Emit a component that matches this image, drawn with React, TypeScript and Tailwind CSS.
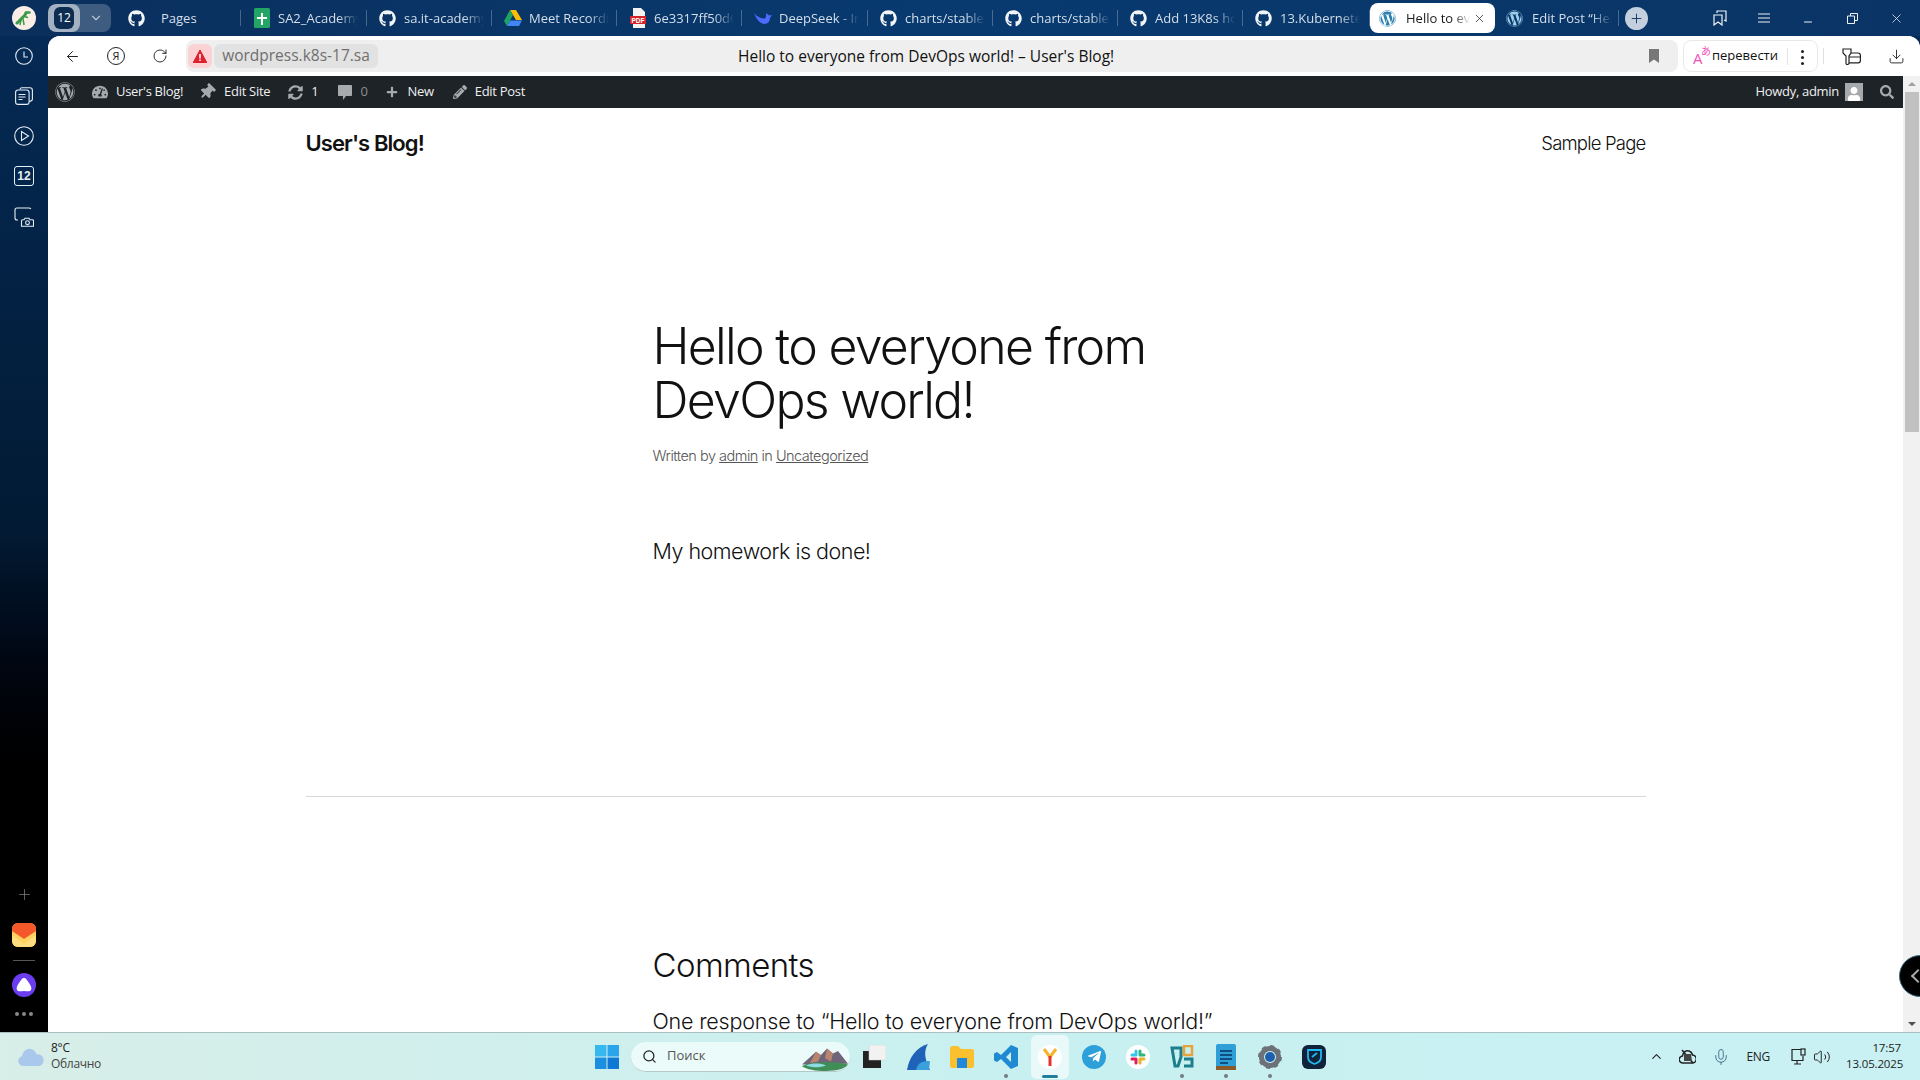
import { ReactNode } from "react";
import { ArrowLeft, ChevronDown, ChevronUp, Download, Mic, Minus, Plus, RotateCw, Search, Volume2, X } from "lucide-react";
import { FaGithub, FaPencilAlt, FaPlus, FaSearch, FaSyncAlt, FaTachometerAlt, FaTelegramPlane, FaThumbtack, FaUser, FaWordpress } from "react-icons/fa";

const fade = "[mask-image:linear-gradient(to_right,black_75%,transparent)]";

function Sheets() {
  return (
    <svg width="16" height="20" viewBox="0 0 16 20">
      <rect width="16" height="20" rx="1.5" fill="#23a566" />
      <path d="M7 5h2v4h4v2H9v6H7v-6H3V9h4z" fill="#fff" />
    </svg>
  );
}

function Drive() {
  return (
    <svg width="18" height="16" viewBox="0 0 18 16">
      <path d="M6 0h6l6 10h-6z" fill="#fbbc04" />
      <path d="M6 0l3 5-6 11-3-5z" fill="#1ea362" />
      <path d="M6 10.5h12L15 16H3z" fill="#4285f4" />
    </svg>
  );
}

function Pdf() {
  return (
    <svg width="16" height="20" viewBox="0 0 16 20">
      <path d="M3 0h8l4 4v16H3z" fill="#f3f3f3" />
      <rect y="8" width="16" height="8" fill="#d6232b" />
      <text x="8" y="14.6" textAnchor="middle" fontSize="6.5" fontWeight="700" fill="#fff" fontFamily="Liberation Sans, sans-serif">PDF</text>
    </svg>
  );
}

function Whale() {
  return (
    <svg width="18" height="14" viewBox="0 0 18 14">
      <path d="M0 2c2 5 5 10 10 11 4 0 6-3 6-6l2-3-3 .5c-1-1.500-2-2-3-2 .5 2 0 4-1 5C8 8 3 6 0 2z" fill="#4d6bfe" />
    </svg>
  );
}

const gh = <FaGithub size={17} className="text-[#f2f5f8]" />;

const tabs: { icon: ReactNode; label: string; width: string }[] = [
  { icon: <Sheets />, label: "SA2_Academy", width: "w-[126px]" },
  { icon: gh, label: "sa.it-academy", width: "w-[125px]" },
  { icon: <Drive />, label: "Meet Recording", width: "w-[125px]" },
  { icon: <Pdf />, label: "6e3317ff50d6", width: "w-[125px]" },
  { icon: <Whale />, label: "DeepSeek - Into", width: "w-[126px]" },
  { icon: gh, label: "charts/stable/", width: "w-[125px]" },
  { icon: gh, label: "charts/stable/", width: "w-[125px]" },
  { icon: gh, label: "Add 13K8s host", width: "w-[125px]" },
  { icon: gh, label: "13.Kubernetes", width: "w-[127px]" },
];

function Tab({ icon, label, width }: { icon: ReactNode; label: string; width: string }) {
  return (
    <div className={`${width} h-9 flex items-center shrink-0 relative`}>
      <div className="w-[37px] flex justify-center pl-1 shrink-0">{icon}</div>
      <span className={`mt-[1px] text-[13px] text-[#d4dfea] whitespace-nowrap overflow-hidden w-[80px] ${fade}`}>{label}</span>
      <span className="absolute right-0 top-[10px] h-4 w-px bg-white/25" />
    </div>
  );
}

function TabBar() {
  return (
    <div className="h-9 flex items-center shrink-0 bg-gradient-to-r from-[#0a2f5c] via-[#083a70] to-[#0a3465]">
      <div className="w-12 flex justify-center shrink-0">
        <div className="w-6 h-6 rounded-full bg-[#fbeee6] flex items-center justify-center">
          <svg width="18" height="18" viewBox="0 0 18 18" fill="none" stroke="#3a9a48" strokeLinecap="round" strokeLinejoin="round">
            <path d="M11 3.500h3.500" strokeWidth="2.500" />
            <path d="M11 4c-1 3-3 4-4.500 5.500C5 11 4 12.500 2 14" strokeWidth="3" />
            <path d="M8 10l1 5.500M6 11l-1 4.500M10 7.500l2.500 1" strokeWidth="1.500" />
          </svg>
        </div>
      </div>
      <div className="h-7 w-[63px] flex rounded-lg bg-[#3d5c80] overflow-hidden shrink-0">
        <div className="w-8 bg-[#a3b2c2] rounded-lg flex items-center justify-center">
          <div className="w-[20px] h-[22px] bg-[#0c2c52] rounded-[6px] text-white text-[12px] flex items-center justify-center">12</div>
        </div>
        <div className="flex-1 flex items-center justify-center">
          <ChevronDown size={14} className="text-[#b6c4d4]" />
        </div>
      </div>
      <div className="w-[130px] h-9 flex items-center shrink-0 relative">
        <div className="w-[50px] flex justify-center">{gh}</div>
        <span className="mt-[1px] text-[13px] text-[#d4dfea]">Pages</span>
        <span className="absolute right-0 top-[10px] h-4 w-px bg-white/25" />
      </div>
      {tabs.map((t, i) => (
        <Tab key={i} {...t} />
      ))}
      <div className="w-[125px] h-[30px] bg-white rounded-lg flex items-center shrink-0">
        <FaWordpress size={17} className="ml-[9px] text-[#2a7fae]" />
        <span className={`mt-[1px] text-[13px] text-[#1a1a1a] ml-[10px] whitespace-nowrap overflow-hidden w-[64px] ${fade}`}>Hello to everyone</span>
        <X size={13} strokeWidth={1.5} className="text-[#333] ml-[3px]" />
      </div>
      <div className="w-[124px] h-9 flex items-center shrink-0 relative">
        <FaWordpress size={17} className="ml-[11px] text-[#9fd0ea]" />
        <span className={`mt-[1px] text-[13px] text-[#d4dfea] ml-[9px] whitespace-nowrap overflow-hidden w-[80px] ${fade}`}>Edit Post “Hello</span>
        <span className="absolute right-0 top-[10px] h-4 w-px bg-white/25" />
      </div>
      <div className="w-[23px] h-[23px] ml-[6px] rounded-full bg-[#c5d0de] flex items-center justify-center shrink-0">
        <Plus size={15} strokeWidth={1.5} className="text-[#14355c]" />
      </div>
      <div className="ml-auto mr-[2px] flex items-center text-[#eef2f6]">
        <div className="w-[44px] flex justify-center">
          <svg width="14" height="16" viewBox="0 0 14 16" fill="none" stroke="currentColor" strokeWidth="1.2">
            <path d="M1 5h8v10L5 12l-4 3z" />
            <path d="M4 3V1h9v10l-2-1" />
          </svg>
        </div>
        <div className="w-[44px] flex justify-center">
          <svg width="12" height="10" viewBox="0 0 12 10" stroke="currentColor" strokeWidth="1">
            <path d="M0 1h12M0 5h12M0 9h12" />
          </svg>
        </div>
        <div className="w-[44px] flex justify-center pt-2">
          <Minus size={12} />
        </div>
        <div className="w-[44px] flex justify-center">
          <svg width="11" height="11" viewBox="0 0 11 11" fill="none" stroke="currentColor">
            <path d="M.5 3h7v7.500h-7zM3.500 3V.5h7v7H8" />
          </svg>
        </div>
        <div className="w-[44px] flex justify-center">
          <X size={15} strokeWidth={1.2} />
        </div>
      </div>
    </div>
  );
}

function Sidebar() {
  return (
    <div className="w-12 shrink-0 flex flex-col justify-between items-center pb-[16px] bg-gradient-to-b from-[#052a55] via-[#021a33] to-black to-80%">
      <div className="flex flex-col items-center text-[#e8eef5]">
        <div className="h-10 flex items-center">
          <svg width="18" height="18" viewBox="0 0 18 18" fill="none" stroke="currentColor" strokeWidth="1.100">
            <circle cx="9" cy="9" r="8.300" />
            <path d="M9 4.500V10h4" />
          </svg>
        </div>
        <div className="h-10 flex items-center">
          <svg width="18" height="18" viewBox="0 0 18 18" fill="none" stroke="currentColor" strokeWidth="1.100">
            <rect x=".6" y="3" width="13.500" height="14.400" rx="2.500" />
            <path d="M5 2.500c0-1 1-1.700 2-1.700h8c1.500 0 2.400 1 2.400 2.400v9c0 1-.6 1.800-3.300 2.300M3.500 7.500h7M3.500 10h7M3.500 12.500h4" />
          </svg>
        </div>
        <div className="h-10 flex items-center">
          <svg width="20" height="20" viewBox="0 0 20 20" fill="none" stroke="currentColor" strokeWidth="1.100">
            <circle cx="10" cy="10" r="9.300" />
            <path d="M7.500 5.500v9l7-4.500z" />
          </svg>
        </div>
        <div className="h-10 flex items-center">
          <div className="w-5 h-5 rounded-[3px] border border-current text-[12px] font-bold flex items-center justify-center font-['Liberation_Sans',sans-serif]">12</div>
        </div>
        <div className="h-10 flex items-center pt-[1px]">
          <svg width="20" height="20" viewBox="0 0 20 20" fill="none" stroke="currentColor" strokeWidth="1.100">
            <path d="M1 11V3c0-1.200.8-2 2-2h12c1 0 1.500.4 1.800 1M1 11c0 1.200.8 2 2 2h1" />
            <path d="M7.500 19.300v-5.500c0-.6.400-1 1-1H10l1-1.500h4l1 1.500h2.500c.6 0 1 .4 1 1v5.500z" />
            <circle cx="13.500" cy="15.700" r="1.900" />
          </svg>
        </div>
      </div>
      <div className="flex flex-col items-center">
        <Plus size={17} strokeWidth={1} className="text-[#8a8a8a] mb-[20px]" />
        <svg width="24" height="24" viewBox="0 0 24 24">
          <rect width="24" height="24" rx="6" fill="#ffd25f" />
          <path d="M0 6a6 6 0 0 1 6-6h12a6 6 0 0 1 6 6v2l-12 8L0 8z" fill="#f4572a" />
          <path d="M0 12l12 9 12-9v6a6 6 0 0 1-6 6H6a6 6 0 0 1-6-6z" fill="#ffdc7d" />
        </svg>
        <div className="w-[22px] h-px bg-[#555] mt-[13px] mb-3" />
        <div className="w-6 h-6 rounded-full bg-[#6b3cf0] flex items-center justify-center">
          <svg width="16" height="14" viewBox="0 0 16 14">
            <path d="M8 0c2 0 3 2 5 5 2 3 3 5 2 7-1 2-4 1-7 1s-6 1-7-1c-1-2 0-4 2-7 2-3 3-5 5-5z" fill="#fff" />
          </svg>
        </div>
        <div className="flex gap-[3px] mt-[15px]">
          <span className="w-1 h-1 rounded-full bg-[#888]" />
          <span className="w-1 h-1 rounded-full bg-[#888]" />
          <span className="w-1 h-1 rounded-full bg-[#888]" />
        </div>
      </div>
    </div>
  );
}

function AddressRow() {
  return (
    <div className="h-10 flex items-center shrink-0 bg-white">
      <div className="w-12 flex justify-center">
        <ArrowLeft size={17} strokeWidth={1.4} className="text-[#222]" />
      </div>
      <div className="w-10 flex justify-center">
        <div className="w-[18px] h-[18px] rounded-full border border-[#222] text-[11px] text-[#222] flex items-center justify-center">Я</div>
      </div>
      <div className="w-12 flex justify-center">
        <RotateCw size={16} strokeWidth={1.4} className="text-[#222]" />
      </div>
      <div className="w-[1492px] h-8 ml-[2px] rounded-lg bg-[#efefef] flex items-center relative shrink-0">
        <div className="ml-[2px] w-6 h-6 rounded-md bg-[#fbd3d5] flex items-center justify-center">
          <svg width="14" height="13" viewBox="0 0 14 13">
            <path d="M7 0l7 13H0z" fill="#e0202c" stroke="#e0202c" strokeLinejoin="round" />
            <path d="M6.200 4h1.600v4.500H6.200zM6.200 9.500h1.600V11H6.200z" fill="#fff" />
          </svg>
        </div>
        <div className="ml-[2px] h-6 w-[164px] rounded-md bg-[#e2e2e2] text-[15.500px] text-[#6f6f6f] flex items-center justify-center">wordpress.k8s-17.sa</div>
        <span className="absolute left-[552px] top-[5px] text-[15.500px] leading-[22px] text-[#111]">Hello to everyone from DevOps world! – User's Blog!</span>
        <svg className="absolute right-[19px] top-[9px]" width="10" height="14" viewBox="0 0 10 14">
          <path d="M0 0h10v14L5 10.500 0 14z" fill="#777" />
        </svg>
      </div>
      <div className="w-[135px] h-8 ml-[5px] rounded-lg border border-[#e8e8e8] flex items-center shrink-0 relative">
        <span className="ml-[9px] w-[18px] h-5 relative text-[#f04fb8] shrink-0">
          <span className="absolute left-0 top-[5px] text-[15px] leading-[15px]">A</span>
          <span className="absolute left-[8px] top-[-1px] text-[10px] leading-[12px] font-['Noto_Sans_CJK_JP',sans-serif]">あ</span>
        </span>
        <span className="ml-[1px] text-[13px] text-[#111]">перевести</span>
        <span className="absolute left-[103px] top-[7px] h-[17px] w-px bg-[#e4e4e4]" />
        <span className="absolute left-[117px] top-[9px] flex flex-col gap-[3px]">
          <span className="w-[3px] h-[3px] rounded-full bg-[#222]" />
          <span className="w-[3px] h-[3px] rounded-full bg-[#222]" />
          <span className="w-[3px] h-[3px] rounded-full bg-[#222]" />
        </span>
      </div>
      <span className="ml-[5px] h-4 w-px bg-[#e0e0e0]" />
      <div className="w-[55px] flex justify-center">
        <svg width="19" height="17" viewBox="0 0 19 17" fill="none" stroke="#222" strokeWidth="1.200">
          <path d="M1 1h8v4l-2 3v7c0 1-1 1.500-2 1.500S4 16 4 15V8L1 5z" />
          <path d="M9 5h7c1.500 0 2.400 1 2.400 2.400v5c0 1.500-1 2.400-2.400 2.400H7M7 9h11" />
        </svg>
      </div>
      <div className="w-[34px] flex justify-center">
        <Download size={17} strokeWidth={1.3} className="text-[#222]" />
      </div>
    </div>
  );
}

function AdminItem({ icon, label, muted, iconClass }: { icon: ReactNode; label: string; muted?: boolean; iconClass: string }) {
  return (
    <div className={`flex items-center ${iconClass}`}>
      <span className="text-[#a7aaad] flex items-center">{icon}</span>
      <span className={muted ? "text-[#8c8f94]" : "text-[#f0f0f1]"}>{label}</span>
    </div>
  );
}

function AdminBar() {
  return (
    <div className="h-8 shrink-0 bg-[#1d2327] flex items-center text-[13px] font-['Open_Sans',sans-serif] tracking-[-0.3px] whitespace-nowrap">
      <FaWordpress size={20} className="ml-[7px] text-[#a7aaad] shrink-0" />
      <AdminItem iconClass="ml-[17px] gap-[8px]" icon={<FaTachometerAlt size={16} />} label="User's Blog!" />
      <AdminItem iconClass="ml-[16px] gap-[9px]" icon={<FaThumbtack size={16} className="rotate-45" />} label="Edit Site" />
      <AdminItem iconClass="ml-[18px] gap-[8px]" icon={<FaSyncAlt size={15} />} label="1" />
      <AdminItem
        iconClass="ml-[20px] gap-[8px]"
        icon={
          <svg width="14" height="15" viewBox="0 0 14 15" fill="currentColor">
            <path d="M1 0h12c.6 0 1 .4 1 1v9c0 .6-.4 1-1 1H8l-3 4v-4H1c-.6 0-1-.4-1-1V1c0-.6.4-1 1-1z" />
          </svg>
        }
        label="0"
        muted
      />
      <AdminItem iconClass="ml-[18px] gap-[10px]" icon={<FaPlus size={12} />} label="New" />
      <AdminItem iconClass="ml-[19px] gap-[8px]" icon={<FaPencilAlt size={14} />} label="Edit Post" />
      <span className="ml-auto text-[#f0f0f1]">Howdy, admin</span>
      <span className="ml-[6px] w-[18px] h-[18px] bg-[#a7aaad] overflow-hidden flex items-end justify-center">
        <FaUser size={14} className="text-white" />
      </span>
      <FaSearch size={14} className="ml-[17px] mr-[9px] text-[#a7aaad]" />
    </div>
  );
}

function Scrollbar() {
  return (
    <div className="w-[17px] shrink-0 bg-[#f1f1f1] flex flex-col items-center justify-between">
      <div className="flex flex-col items-center w-full">
        <div className="h-4 flex items-center">
          <div className="w-0 h-0 border-x-[4px] border-x-transparent border-b-[4px] border-b-[#a0a0a0]" />
        </div>
        <div className="w-[14px] h-[340px] bg-[#c1c1c1]" />
      </div>
      <div className="h-4 flex items-center">
        <div className="w-0 h-0 border-x-[4px] border-x-transparent border-t-[4px] border-t-[#505050]" />
      </div>
    </div>
  );
}

function Page() {
  return (
    <div className="flex-1 overflow-hidden bg-white font-['Inter',sans-serif] text-[#111]">
      <div className="w-[1340px] mx-auto">
        <div className="flex items-center justify-between h-[58px] pt-[13px]">
          <span className="text-[22px] font-semibold tracking-[-0.9px]">User's Blog!</span>
          <span className="text-[18.500px] font-light tracking-[-0.8px]">Sample Page</span>
        </div>
        <div className="pl-[347px] pt-[153px] h-[631px] border-b border-[#d8d8d8]">
          <h1 className="text-[50px] leading-[54px] font-light tracking-[-1.7px]">
            Hello to everyone from
            <br />
            DevOps world!
          </h1>
          <p className="mt-[19px] text-[14.500px] leading-[20px] font-light text-[#555] tracking-[-0.5px]">
            Written by <span className="underline">admin</span> in <span className="underline">Uncategorized</span>
          </p>
          <p className="mt-[69px] text-[21.500px] leading-[32px] font-light tracking-[-0.5px]">My homework is done!</p>
        </div>
        <div className="pl-[347px] pt-[146px]">
          <h2 className="text-[33px] leading-[44px] font-light tracking-[-0.6px]">Comments</h2>
          <p className="mt-[18px] text-[21.500px] leading-[32px] font-light tracking-[-0.2px] whitespace-nowrap">One response to “Hello to everyone from DevOps world!”</p>
        </div>
      </div>
    </div>
  );
}

function Shark() {
  return (
    <svg width="24" height="26" viewBox="0 0 24 26">
      <path d="M1 26C3 14 10 3 22 0c-4 6-4 14 2 26z" fill="#1f63b8" />
      <path d="M10 26c2-7 5-9 14-9l-1 9z" fill="#3aa0dc" />
    </svg>
  );
}

function Folder() {
  return (
    <svg width="24" height="22" viewBox="0 0 24 22">
      <path d="M0 2c0-1 1-2 2-2h6l3 3h11c1 0 2 1 2 2v15c0 1-1 2-2 2H2c-1 0-2-1-2-2z" fill="#fbc02d" />
      <path d="M7 12h10v10H7z" fill="#1f88d8" />
    </svg>
  );
}

function VsCode() {
  return (
    <svg width="24" height="24" viewBox="0 0 24 24">
      <path d="M17 0l7 3v18l-7 3L7 14l-4 3-3-1.500V8.500L3 7l4 3zm0 7l-5 5 5 5z" fill="#1f8ad2" />
    </svg>
  );
}

function Slack() {
  return (
    <div className="w-6 h-6 rounded-full bg-white flex items-center justify-center">
      <svg width="16" height="16" viewBox="0 0 16 16" strokeWidth="3" strokeLinecap="round">
        <path d="M6 2v4M2 6h4" stroke="#36c5f0" fill="none" />
        <path d="M14 6h-4M10 2v4" stroke="#2eb67d" fill="none" />
        <path d="M10 14v-4M14 10h-4" stroke="#ecb22e" fill="none" />
        <path d="M2 10h4M6 14v-4" stroke="#e01e5a" fill="none" />
      </svg>
    </div>
  );
}

function VeeamIcon() {
  return (
    <svg width="24" height="24" viewBox="0 0 24 24" fill="none" strokeWidth="3">
      <path d="M2 3h9v9l-3 9H5z" stroke="#1d7f8c" />
      <path d="M14 14h8v7h-8" stroke="#1d7f8c" />
      <rect x="14" y="1" width="8" height="9" stroke="#e8a33a" strokeWidth="2.500" />
    </svg>
  );
}

function Notes() {
  return (
    <svg width="20" height="26" viewBox="0 0 20 26">
      <rect width="20" height="26" rx="2" fill="#2f9fd8" />
      <rect y="22" width="20" height="4" fill="#8a5a2b" />
      <path d="M4 6h12v2H4zM4 10h12v2H4zM4 14h12v2H4zM4 18h8v2H4z" fill="#0d4f80" />
    </svg>
  );
}

function Gear() {
  return (
    <svg width="24" height="24" viewBox="0 0 24 24">
      <circle cx="12" cy="12" r="8.500" fill="none" stroke="#6c7278" strokeWidth="5" />
      <circle cx="12" cy="12" r="10.500" fill="none" stroke="#6c7278" strokeWidth="3" strokeDasharray="4 4.200" />
      <circle cx="12" cy="12" r="5" fill="#1d5fae" />
    </svg>
  );
}

function Guard() {
  return (
    <div className="w-6 h-6 rounded-md bg-[#10233a] flex items-center justify-center">
      <svg width="15" height="17" viewBox="0 0 15 17" fill="none" stroke="#1fb8f0" strokeWidth="1.800">
        <path d="M1 2h13v7c0 4-3 6-6.500 7C4 15 1 13 1 9zM5 9l5-4" />
      </svg>
    </div>
  );
}

function TaskIcon({ children, dot, active }: { children: ReactNode; dot?: boolean; active?: boolean }) {
  return (
    <div className={`w-[38px] h-[44px] mx-[3px] rounded-md flex items-center justify-center relative ${active ? "bg-white/60" : ""}`}>
      {children}
      {dot && <span className="absolute bottom-[1px] w-1 h-1 rounded-full bg-[#6f7c80]" />}
      {active && <span className="absolute bottom-[1px] w-4 h-[3px] rounded-full bg-[#207f9b]" />}
    </div>
  );
}

function Taskbar() {
  return (
    <div className="h-12 shrink-0 flex items-center border-t border-[#a9bfc0] bg-gradient-to-r from-[#d8eee8] via-[#c9f0f0] to-[#c9f0f3] font-['Open_Sans',sans-serif] text-[#222] relative">
      <svg className="ml-[18px] shrink-0" width="26" height="18" viewBox="0 0 26 18">
        <path d="M5 18a5 5 0 0 1-1-9.800C5 3 9 0 13 1c3 .7 5 3 5.500 5.500A5.800 5.800 0 0 1 21 18z" fill="#a9c8ec" />
      </svg>
      <div className="ml-[7px] text-[12px] leading-[16px] w-[60px] shrink-0 tracking-[-0.3px] -mt-[1px]">
        <div>8°C</div>
        <div className="text-[#444]">Облачно</div>
      </div>
      <svg className="ml-[484px] shrink-0" width="24" height="24" viewBox="0 0 24 24">
        <path d="M0 0h11.500v11.500H0z" fill="#35b8f0" />
        <path d="M12.500 0H24v11.500H12.500z" fill="#2aa4ea" />
        <path d="M0 12.500h11.500V24H0z" fill="#1a8fe0" />
        <path d="M12.500 12.500H24V24H12.500z" fill="#0f78d4" />
      </svg>
      <div className="ml-[12px] w-[219px] h-[30px] rounded-full bg-[#eafbfa] border-b border-[#b5c9c9] flex items-center relative shrink-0">
        <Search size={15} strokeWidth={2} className="ml-[11px] text-[#222]" />
        <span className="ml-[10px] text-[13px] text-[#555]">Поиск</span>
        <svg className="absolute right-0 top-[5px]" width="50" height="24" viewBox="0 0 50 30" preserveAspectRatio="none">
          <path d="M2 22L16 6l5 4 6-8 6 6 5-3 10 16z" fill="#6f6478" />
          <path d="M16 6l5 4-3 8-8 2zM27 2l6 6-2 10-6-4z" fill="#b98570" />
          <path d="M2 24c8-6 34-6 46-2-4 6-12 8-22 8S6 28 2 24z" fill="#3f8e55" />
          <path d="M6 23c6-3 14-3 20 0-6 3-14 3-20 0z" fill="#8cdce4" />
        </svg>
      </div>
      <svg className="ml-[13px] shrink-0" width="23" height="23" viewBox="0 0 23 23">
        <rect x="0" y="6" width="18" height="17" fill="#222" />
        <rect x="6" y="0" width="17" height="15" fill="#f2f2f2" stroke="#d0d0d0" strokeWidth=".5" />
      </svg>
      <div className="ml-[10px] flex items-center shrink-0">
        <TaskIcon><Shark /></TaskIcon>
        <TaskIcon><Folder /></TaskIcon>
        <TaskIcon dot><VsCode /></TaskIcon>
        <TaskIcon active>
          <div className="w-6 h-6 rounded-full bg-white flex items-center justify-center">
            <svg width="14" height="18" viewBox="0 0 14 18" fill="none" strokeWidth="3">
              <path d="M1 1l6 8 6-8" stroke="#f4b32a" />
              <path d="M7 8v10" stroke="#e5322d" />
            </svg>
          </div>
        </TaskIcon>
        <TaskIcon>
          <div className="w-6 h-6 rounded-full bg-[#2d9fd9] flex items-center justify-center">
            <FaTelegramPlane size={15} className="text-white" />
          </div>
        </TaskIcon>
        <TaskIcon><Slack /></TaskIcon>
        <TaskIcon dot><VeeamIcon /></TaskIcon>
        <TaskIcon dot><Notes /></TaskIcon>
        <TaskIcon dot><Gear /></TaskIcon>
        <TaskIcon><Guard /></TaskIcon>
      </div>
      <div className="ml-auto flex items-center text-[#222] shrink-0">
        <ChevronUp size={15} strokeWidth={1.8} />
        <svg className="ml-[15px]" width="17" height="15" viewBox="0 0 17 15">
          <path d="M4 14a3.500 3.500 0 0 1-.5-7C4 3 7 1 10 2c2 .6 3 2 3.500 4a4 4 0 0 1-.5 8z" fill="none" stroke="#222" strokeWidth="1.500" />
          <path d="M3 1l11 13" stroke="#222" strokeWidth="1.500" />
          <path d="M5 5h7l1 7H5z" fill="#444" />
        </svg>
        <Mic size={18} strokeWidth={1.2} className="ml-[16px] text-[#3c6c85]" />
        <span className="ml-[16px] text-[12px] tracking-[-0.3px]">ENG</span>
        <svg className="ml-[21px]" width="17" height="17" viewBox="0 0 17 17" fill="none" stroke="#222" strokeWidth="1.200">
          <path d="M10 1.500H1v11h11V8M6 13v3M3 16h7" />
          <rect x="10" y="1" width="4" height="6" />
        </svg>
        <Volume2 size={18} strokeWidth={1.3} className="ml-[5px]" />
        <div className="ml-[15px] w-[55px] mr-[19px] text-right text-[11.500px] leading-[16px] tracking-[-0.15px] -mt-[1px]">
          <div>17:57</div>
          <div>13.05.2025</div>
        </div>
      </div>
    </div>
  );
}

export default function App() {
  return (
    <div className="w-[1920px] h-[1080px] flex flex-col overflow-hidden relative font-['Open_Sans',sans-serif]">
      <TabBar />
      <div className="flex-1 flex min-h-0">
        <Sidebar />
        <div className="flex-1 flex flex-col min-w-0 bg-[#052a55]">
          <div className="flex-1 flex flex-col min-h-0 rounded-t-xl overflow-hidden bg-white">
            <AddressRow />
            <div className="flex-1 flex min-h-0">
              <div className="flex-1 flex flex-col min-w-0">
                <AdminBar />
                <Page />
              </div>
              <Scrollbar />
            </div>
          </div>
        </div>
      </div>
      <Taskbar />
      <div className="absolute left-[1899px] top-[955px] w-[42px] h-[42px] rounded-full bg-black border border-[#3a6a80] flex items-center pl-[13px]">
        <span className="w-[10px] h-[10px] border-l-2 border-b-2 border-[#aaa] rotate-45" />
      </div>
    </div>
  );
}
